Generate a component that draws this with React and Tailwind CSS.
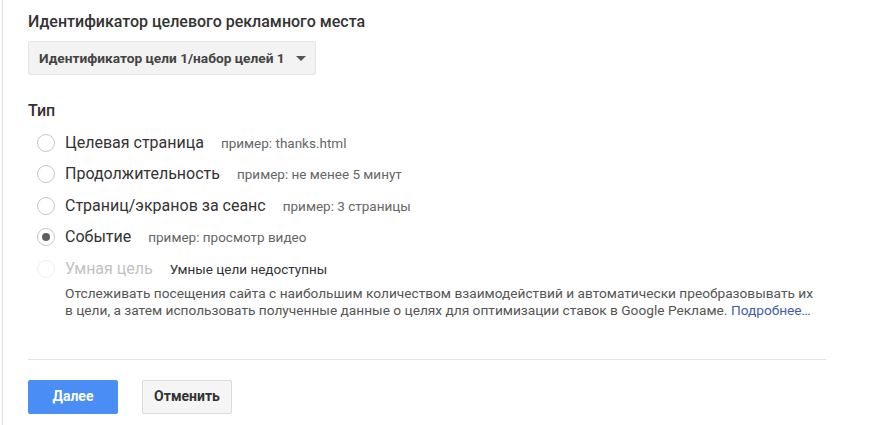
import React from 'react'

const goalTypes = [
  { id: 'dest', label: 'Целевая страница', hint: 'пример: thanks.html' },
  { id: 'duration', label: 'Продолжительность', hint: 'пример: не менее 5 минут' },
  { id: 'pages', label: 'Страниц/экранов за сеанс', hint: 'пример: 3 страницы' },
  { id: 'event', label: 'Событие', hint: 'пример: просмотр видео', checked: true },
]

function Radio({ checked, disabled }) {
  return (
    <span
      className={`flex h-[18px] w-[18px] shrink-0 items-center justify-center rounded-full border ${
        disabled ? 'border-[#f0f0f0]' : 'border-[#c8c8c8]'
      } bg-white`}
    >
      {checked && <span className="h-[8px] w-[8px] rounded-full bg-[#5f5f5f]" />}
    </span>
  )
}

export default function App() {
  return (
    <div className="min-h-[425px] bg-white font-['Roboto',sans-serif] text-[#333]">
      <div className="ml-[2px] min-h-[425px] border-l border-[#e2e2e2] pl-[25px] pt-[11px]">
        {/* Target */}
        <h2 className="text-[16px] font-medium leading-[22px] text-[#333]">
          Идентификатор целевого рекламного места
        </h2>
        <button className="mt-[8px] flex h-[34px] w-[288px] items-center justify-between rounded-[2px] border border-[#e5e5e5] bg-[#f3f3f3] pl-[10px] pr-[9px] text-[13.7px] font-bold text-[#444]">
          <span>Идентификатор цели 1/набор целей 1</span>
          <span className="h-0 w-0 border-x-[5px] border-t-[5px] border-x-transparent border-t-[#555]" />
        </button>

        {/* Type */}
        <h2 className="mt-[25px] text-[16px] font-medium leading-[22px] text-[#333]">Тип</h2>
        <div className="mt-[5px] flex flex-col">
          {goalTypes.map((t) => (
            <label key={t.id} className="flex h-[31.5px] items-center pl-[9px]">
              <Radio checked={t.checked} />
              <span className="ml-[10px] text-[16px] text-[#333]">{t.label}</span>
              <span className="ml-[17px] text-[13.5px] text-[#666]">{t.hint}</span>
            </label>
          ))}
          <label className="flex h-[31.5px] items-center pl-[9px]">
            <Radio disabled />
            <span className="ml-[10px] text-[16px] text-[#c2c2c2]">Умная цель</span>
            <span className="ml-[17px] text-[13.5px] text-[#333]">Умные цели недоступны</span>
          </label>
        </div>
        <p className="ml-[37px] w-[780px] text-[13.7px] leading-[17px] text-[#555]">
          Отслеживать посещения сайта с наибольшим количеством взаимодействий и автоматически преобразовывать их
          <br />
          в цели, а затем использовать полученные данные о целях для оптимизации ставок в Google Рекламе.{' '}
          <a href="#" className="text-[#3f5ea6]">Подробнее…</a>
        </p>

        <div className="mt-[40px] w-[798px] border-t border-[#e3e3e3]" />

        {/* Actions */}
        <div className="mt-[20px] flex gap-[24px]">
          <button className="h-[34px] w-[90px] rounded-[2px] bg-[#4a8ef5] text-[14px] font-bold text-white">
            Далее
          </button>
          <button className="h-[34px] w-[90px] rounded-[2px] border border-[#dcdcdc] bg-[#f5f5f5] text-[14px] font-bold text-[#333]">
            Отменить
          </button>
        </div>
      </div>
    </div>
  )
}
